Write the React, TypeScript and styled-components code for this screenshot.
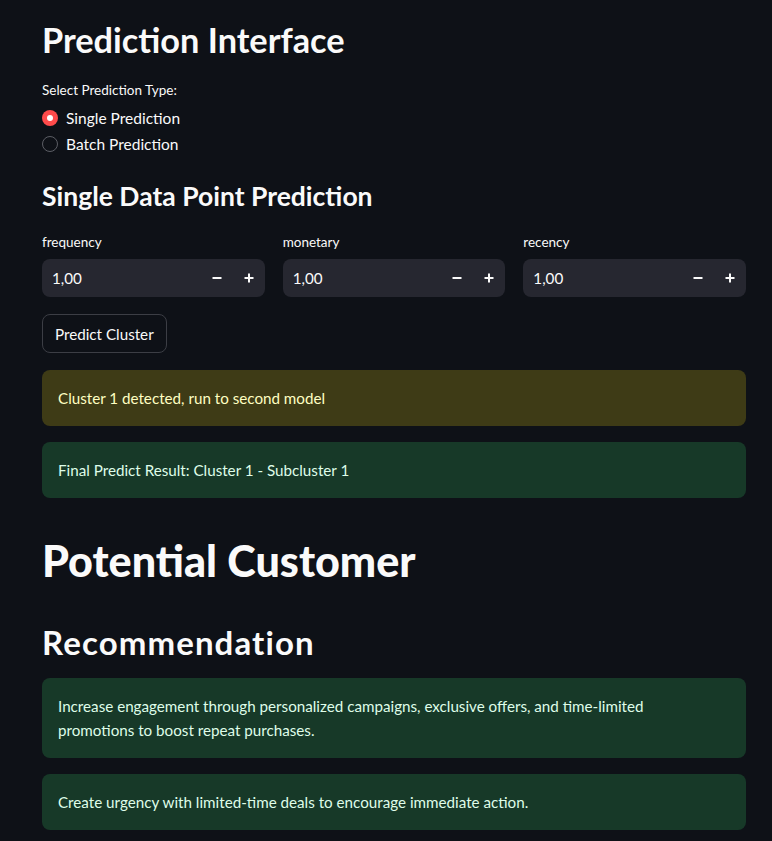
import React from "react";
import styled, { createGlobalStyle } from "styled-components";

const Global = createGlobalStyle`
  html, body { margin: 0; padding: 0; background: #0e1117; }
  body { font-family: "Lato", "Noto Sans", sans-serif; color: #fafafa; }
  * { box-sizing: border-box; }
`;

const Main = styled.main`
  width: 772px;
  min-height: 841px;
  padding: 18px 26px 12px 42px;
  display: flex;
  flex-direction: column;
  background: #0e1117;
`;

const Heading = styled.h2<{ $size: number; $weight: number; $lh: number; $mt: number; $ls?: number }>`
  margin: ${(p) => p.$mt}px 0 0;
  font-size: ${(p) => p.$size}px;
  font-weight: ${(p) => p.$weight};
  line-height: ${(p) => p.$lh}px;
  color: #fafafa;
  letter-spacing: ${(p) => p.$ls ?? 0}px;
`;

const Label = styled.div<{ $mt: number }>`
  margin-top: ${(p) => p.$mt}px;
  font-size: 13.5px;
  line-height: 20px;
  color: #fafafa;
`;

const RadioGroup = styled.div`
  margin-top: 5px;
  display: flex;
  flex-direction: column;
`;

const RadioRow = styled.label`
  display: flex;
  align-items: center;
  gap: 8px;
  height: 26px;
  font-size: 15.5px;
`;

const RadioDot = styled.span<{ $on: boolean }>`
  width: 16px;
  height: 16px;
  border-radius: 50%;
  display: flex;
  align-items: center;
  justify-content: center;
  background: ${(p) => (p.$on ? "#ff4b4b" : "transparent")};
  border: ${(p) => (p.$on ? "none" : "1px solid #5c5e65")};
  &::after {
    content: "";
    width: 6px;
    height: 6px;
    border-radius: 50%;
    background: #ffffff;
    display: ${(p) => (p.$on ? "block" : "none")};
  }
`;

const Columns = styled.div`
  margin-top: 18px;
  display: grid;
  grid-template-columns: repeat(3, 1fr);
  column-gap: 18px;
`;

const Field = styled.div`
  display: flex;
  flex-direction: column;
  gap: 7px;
`;

const FieldLabel = styled.div`
  font-size: 13.5px;
  line-height: 20px;
`;

const NumberBox = styled.div`
  height: 38px;
  background: #262730;
  border-radius: 8px;
  display: flex;
  align-items: center;
  padding-left: 10px;
`;

const NumberValue = styled.span`
  flex: 1;
  font-size: 15.2px;
`;

const StepButton = styled.span`
  width: 32px;
  height: 38px;
  display: flex;
  align-items: center;
  justify-content: center;
  color: #fafafa;
`;

const Button = styled.button`
  margin-top: 17px;
  align-self: flex-start;
  height: 39px;
  padding: 0 12px;
  background: #0e1117;
  border: 1px solid #3c3e45;
  border-radius: 8px;
  color: #fafafa;
  font-family: inherit;
  font-size: 15.2px;
`;

const Alert = styled.div<{ $kind: "warning" | "success"; $mt: number }>`
  margin-top: ${(p) => p.$mt}px;
  padding: 16px;
  border-radius: 8px;
  font-size: 15.2px;
  line-height: 24px;
  background: ${(p) => (p.$kind === "warning" ? "#3e3b16" : "#173928")};
  color: ${(p) => (p.$kind === "warning" ? "#ffffc2" : "#dffde9")};
`;

const AlertText = styled.div`
  max-width: 620px;
`;

const Minus = () => (
  <svg width="10" height="10" viewBox="0 0 10 10">
    <rect x="0.5" y="4" width="9" height="2" fill="#fafafa" />
  </svg>
);
const Plus = () => (
  <svg width="10" height="10" viewBox="0 0 10 10">
    <rect x="0.5" y="4" width="9" height="2" fill="#fafafa" />
    <rect x="4" y="0.5" width="2" height="9" fill="#fafafa" />
  </svg>
);

const fields = ["frequency", "monetary", "recency"];

export default function App() {
  return (
    <>
      <Global />
      <Main>
        <Heading $size={34.3} $weight={700} $lh={44} $mt={0}>Prediction Interface</Heading>
        <Label $mt={18}>Select Prediction Type:</Label>
        <RadioGroup>
          <RadioRow><RadioDot $on />Single Prediction</RadioRow>
          <RadioRow><RadioDot $on={false} />Batch Prediction</RadioRow>
        </RadioGroup>
        <Heading as="h3" $size={26.5} $weight={700} $lh={36} $mt={21}>Single Data Point Prediction</Heading>
        <Columns>
          {fields.map((f) => (
            <Field key={f}>
              <FieldLabel>{f}</FieldLabel>
              <NumberBox>
                <NumberValue>1,00</NumberValue>
                <StepButton><Minus /></StepButton>
                <StepButton><Plus /></StepButton>
              </NumberBox>
            </Field>
          ))}
        </Columns>
        <Button>Predict Cluster</Button>
        <Alert $kind="warning" $mt={17}>Cluster 1 detected, run to second model</Alert>
        <Alert $kind="success" $mt={16}>Final Predict Result: Cluster 1 - Subcluster 1</Alert>
        <Heading as="h1" $size={43.1} $weight={900} $lh={54} $mt={35}>Potential Customer</Heading>
        <Heading $size={33} $weight={700} $lh={40} $mt={35} $ls={1.1}>Recommendation</Heading>
        <Alert $kind="success" $mt={16}>
          <AlertText>
            Increase engagement through personalized campaigns, exclusive offers, and time-limited promotions to boost repeat purchases.
          </AlertText>
        </Alert>
        <Alert $kind="success" $mt={16}>Create urgency with limited-time deals to encourage immediate action.</Alert>
      </Main>
    </>
  );
}
